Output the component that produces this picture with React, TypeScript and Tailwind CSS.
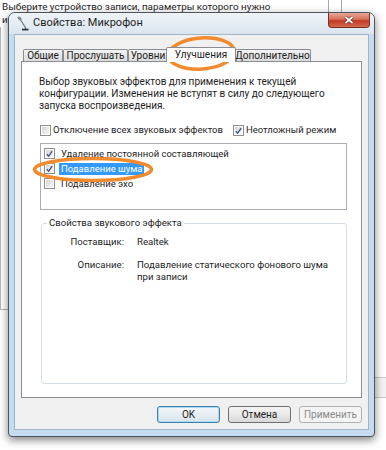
import React from 'react';

const tabs = [
  { label: 'Общие', w: 'w-[40px]' },
  { label: 'Прослушать', w: 'w-[65px]' },
  { label: 'Уровни', w: 'w-[40px]' },
  { label: 'Улучшения', w: 'w-[70px]', active: true },
  { label: 'Дополнительно', w: 'w-[77px]' },
];

const effects = [
  { label: 'Удаление постоянной составляющей', checked: true },
  { label: 'Подавление шума', checked: true, selected: true },
  { label: 'Подавление эхо', checked: false },
];

function CheckBox({ checked }: { checked?: boolean }) {
  return (
    <span className="flex h-[11px] w-[11px] shrink-0 items-center justify-center border border-[#8e8f8f] bg-white p-px">
      <span className="flex h-full w-full items-center justify-center bg-[linear-gradient(135deg,#d6d6d6,#f7f7f7)]">
        {checked && (
          <svg viewBox="0 0 8 8" className="h-[8px] w-[8px]">
            <path d="M1 4.2 L3 6.6 L7 0.8" stroke="#3a4d86" strokeWidth="1.5" fill="none" />
          </svg>
        )}
      </span>
    </span>
  );
}

function MicIcon() {
  return (
    <svg width="12" height="15" viewBox="0 0 12 15">
      <path d="M2.5 2.5 L8.5 11.5" stroke="#6b7480" strokeWidth="1.2" />
      <ellipse cx="2.6" cy="2.4" rx="2.2" ry="1.5" transform="rotate(40 2.6 2.4)" fill="#7e8995" />
      <path d="M8.5 11.5 V13" stroke="#4a5058" strokeWidth="1.2" />
      <path d="M5 13.6 H11.5" stroke="#30353c" strokeWidth="1.8" />
    </svg>
  );
}

export default function App() {
  return (
    <div className="relative h-[450px] w-[386px] overflow-hidden bg-white font-['Roboto',sans-serif] text-[9.6px] text-[#1e1e1e]">
      {/* desktop behind the dialog */}
      <div className="pl-[2px] text-[9.9px] leading-[13px]">
        <div>Выберите устройство записи, параметры которого нужно</div>
        <div className="w-[6px] overflow-hidden">и</div>
      </div>
      <div className="absolute left-[328px] top-0 h-[14px] w-[14px] border-x border-[#a9a9a9]" />
      <div className="absolute left-0 top-[27px] h-[283px] w-[9px] border-l border-b border-[#b5b5b5]" />
      <div className="absolute right-0 top-[377px] h-[21px] w-[12px] border-y border-[#c8c8c8] bg-[#f2f2f2]" />

      {/* dialog window */}
      <div className="absolute left-[8px] top-[12px] flex h-[425px] w-[367px] flex-col rounded-t-[7px] rounded-b-[4px] border border-[#4d5560] bg-[#c5dbf1] shadow-[0_3px_9px_rgba(0,0,0,0.5)]">
        <div className="flex h-[21px] items-center rounded-t-[6px] bg-[linear-gradient(180deg,#eef3f8,#dbe5ef)] pl-[8px]">
          <MicIcon />
          <span className="ml-[4px] text-[11px]">Свойства: Микрофон</span>
        </div>
        <div className="absolute right-[4px] top-0 flex h-[15px] w-[42px] items-center justify-center rounded-b-[4px] border border-t-0 border-[#7a2f25] bg-[linear-gradient(180deg,#e9a797,#d6705b_45%,#c13a23_55%,#d66a52)]">
          <svg width="10" height="8" viewBox="0 0 10 8">
            <path d="M1.5 1 L8.5 7 M8.5 1 L1.5 7" stroke="#5a2019" strokeWidth="3" />
            <path d="M1.5 1 L8.5 7 M8.5 1 L1.5 7" stroke="#ffffff" strokeWidth="1.8" />
          </svg>
        </div>

        <div className="mx-[5px] mb-[6px] flex flex-1 flex-col border border-[#9fb4c8] bg-[#f0f0f0] px-[6px] pt-[12px]">
          {/* tabs */}
          <div className="flex h-[14px] items-end pl-[2px] text-[10px]">
            {tabs.map((t) =>
              t.active ? (
                <div
                  key={t.label}
                  className={`${t.w} relative z-10 -mx-[2px] -mb-px flex h-[15px] items-center justify-center rounded-t-[2px] border border-b-0 border-[#898c95] bg-white pb-[2px]`}
                >
                  {t.label}
                </div>
              ) : (
                <div
                  key={t.label}
                  className={`${t.w} flex h-[12px] items-center justify-center rounded-t-[2px] border border-b-0 border-[#898c95] bg-[linear-gradient(180deg,#f4f4f4,#e6e6e6_50%,#dcdcdc)] leading-none`}
                >
                  {t.label}
                </div>
              ),
            )}
          </div>

          {/* panel */}
          <div className="flex h-[337px] flex-col border border-[#898c95] bg-white">
            <div className="pl-[17px] pt-[14px] text-[10px] leading-[12px]">
              <div>Выбор звуковых эффектов для применения к текущей</div>
              <div>конфигурации. Изменения не вступят в силу до следующего</div>
              <div>запуска воспроизведения.</div>
            </div>

            <div className="mt-[12px] flex h-[13px] items-center pl-[18px] text-[9.5px]">
              <CheckBox />
              <span className="ml-[2px]">Отключение всех звуковых эффектов</span>
              <span className="ml-[10px]"><CheckBox checked /></span>
              <span className="ml-[2px]">Неотложный режим</span>
            </div>

            <div className="ml-[18px] mt-[6px] h-[67px] w-[307px] border border-[#abadb3] pl-[3px] pt-[2px] text-[9.5px]">
              {effects.map((e) => (
                <div key={e.label} className="flex h-[15px] items-center">
                  <CheckBox checked={e.checked} />
                  <span
                    className={`ml-[4px] px-[2px] leading-[12px] ${e.selected ? 'bg-[#3399ff] text-white' : ''}`}
                  >
                    {e.label}
                  </span>
                </div>
              ))}
            </div>

            <div className="relative ml-[19px] mt-[13px] h-[161px] w-[306px] rounded-[3px] border border-[#d5dfe5] pt-[12px]">
              <span className="absolute left-[5px] top-[-7px] bg-white px-[2px] leading-[12px]">
                Свойства звукового эффекта
              </span>
              <div className="flex leading-[12px]">
                <span className="w-[82px] text-right">Поставщик:</span>
                <span className="ml-[13px]">Realtek</span>
              </div>
              <div className="mt-[11px] flex leading-[12px]">
                <span className="w-[82px] text-right">Описание:</span>
                <span className="ml-[13px]">
                  <span className="block">Подавление статического фонового шума</span>
                  <span className="block">при записи</span>
                </span>
              </div>
            </div>
          </div>

          {/* buttons */}
          <div className="mt-[8px] flex justify-end gap-[8px] text-[10px]">
            <button className="h-[17px] w-[63px] rounded-[3px] border border-[#3c7fb1] bg-[linear-gradient(180deg,#f3f7fa,#e6eef3_50%,#d9e4ea)] leading-none shadow-[inset_0_0_0_1px_#a9dbf6]">
              OK
            </button>
            <button className="h-[17px] w-[63px] rounded-[3px] border border-[#707070] bg-[linear-gradient(180deg,#f4f4f4,#e9e9e9_50%,#d8d8d8)] leading-none">
              Отмена
            </button>
            <button className="h-[17px] w-[63px] rounded-[3px] border border-[#adb2b5] bg-[#f4f4f4] leading-none text-[#8a8a8a]">
              Применить
            </button>
          </div>
        </div>
      </div>

      {/* orange annotation marks */}
      <svg className="pointer-events-none absolute left-0 top-0" width="386" height="450">
        <ellipse cx="201.5" cy="53.5" rx="33" ry="15.5" transform="rotate(-4 201.5 53.5)" fill="none" stroke="#f28a2e" strokeWidth="3.5" />
        <ellipse cx="93" cy="169.5" rx="58.5" ry="11" fill="none" stroke="#f28a2e" strokeWidth="3.5" />
      </svg>
    </div>
  );
}
